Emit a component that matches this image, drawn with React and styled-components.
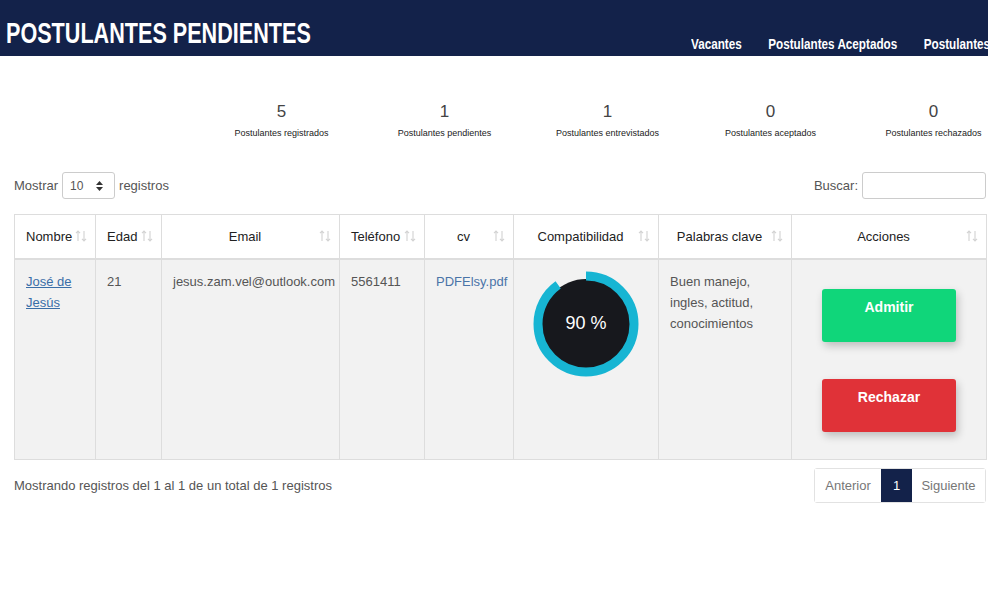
import React from 'react';
import styled, { createGlobalStyle } from 'styled-components';

const GlobalStyle = createGlobalStyle`
  body {
    margin: 0;
    background: #fff;
    font-family: 'Liberation Sans', Arial, sans-serif;
    color: #555;
    overflow: hidden;
  }
`

const Header = styled.header`
  height: 56px;
  background: #13224a;
  display: flex;
  align-items: flex-end;
  overflow: hidden;
`

const Title = styled.h1`
  flex: 1;
  margin: 0 0 8px 6px;
  font-size: 30px;
  font-weight: bold;
  color: #fff;
  white-space: nowrap;
  line-height: 1;
  transform: scaleX(0.72);
  transform-origin: left;
`

const Nav = styled.nav`
  flex-shrink: 0;
  width: 297px;
  display: flex;
  gap: 34px;
  margin-bottom: 4px;
  white-space: nowrap;
  transform: scaleX(0.78);
  transform-origin: left;
`

const NavLink = styled.a`
  color: #fff;
  font-weight: bold;
  font-size: 15px;
`

const Stats = styled.div`
  display: flex;
  margin: 46px 0 0 200px;
  width: 830px;
`

const Stat = styled.div`
  width: 163px;
  text-align: center;
`

const StatNum = styled.div`
  font-size: 17px;
  color: #444;
  line-height: 20px;
`

const StatLabel = styled.div`
  font-size: 9px;
  color: #222;
  margin-top: 6px;
`

const Controls = styled.div`
  display: flex;
  justify-content: space-between;
  align-items: center;
  padding: 0 2px 0 14px;
  margin-top: 34px;
  font-size: 13px;
  color: #555;
`

const Group = styled.label`
  display: flex;
  align-items: center;
  gap: 4px;
`

const SelectBox = styled.div`
  width: 53px;
  height: 27px;
  box-sizing: border-box;
  border: 1px solid #ccc;
  border-radius: 3px;
  display: flex;
  align-items: center;
  justify-content: space-between;
  padding: 0 11px 0 7px;
  font-size: 12px;
`

const SearchInput = styled.input`
  width: 124px;
  height: 27px;
  box-sizing: border-box;
  border: 1px solid #ccc;
  border-radius: 3px;
`

const TableWrap = styled.div`
  margin: 15px 2px 0 14px;
`

const Table = styled.table`
  width: 972px;
  border-collapse: collapse;
  table-layout: fixed;
  font-size: 13px;
`

const Th = styled.th`
  position: relative;
  height: 44px;
  box-sizing: border-box;
  border: 1px solid #ddd;
  border-bottom-width: 2px;
  background: #fff;
  color: #222;
  font-weight: normal;
  text-align: ${p => (p.$left ? 'left' : 'center')};
  padding: 0 22px 0 11px;
  white-space: nowrap;
`

const Td = styled.td`
  border: 1px solid #ddd;
  background: #f2f2f2;
  vertical-align: top;
  padding: 11px 11px;
  height: 201px;
  box-sizing: border-box;
  line-height: 21px;
  color: #555;
`

const SortIcon = styled.svg`
  position: absolute;
  right: 8px;
  top: 14px;
`

const NameLink = styled.a`
  color: #3a6ea8;
  text-decoration: underline;
`

const FileLink = styled.a`
  color: #4a74a8;
  text-decoration: none;
`

const Gauge = styled.div`
  position: relative;
  width: 106px;
  height: 106px;
  margin: 0 auto;
`

const GaugeText = styled.div`
  position: absolute;
  inset: 0;
  display: flex;
  align-items: center;
  justify-content: center;
  color: #fff;
  font-size: 18px;
`

const Actions = styled.div`
  display: flex;
  flex-direction: column;
  align-items: center;
  gap: 37px;
  padding-top: 18px;
`

const ActionButton = styled.button`
  width: 134px;
  height: 53px;
  border: none;
  border-radius: 3px;
  background: ${p => p.$color};
  color: #fff;
  font-family: 'Liberation Sans', Arial, sans-serif;
  font-weight: bold;
  font-size: 14px;
  padding-top: 10px;
  display: flex;
  justify-content: center;
  align-items: flex-start;
  box-shadow: 2px 4px 8px rgba(0, 0, 0, 0.22);
`

const Footer = styled.div`
  display: flex;
  justify-content: space-between;
  align-items: center;
  margin: 8px 2px 0 14px;
  font-size: 13px;
`

const Pager = styled.div`
  display: flex;
  height: 33px;
  border: 1px solid #e2e2e2;
  border-radius: 3px;
`

const PageItem = styled.span`
  display: flex;
  align-items: center;
  justify-content: center;
  width: ${p => p.$w}px;
  background: ${p => (p.$active ? '#13224a' : '#fff')};
  color: ${p => (p.$active ? '#fff' : '#777')};
  font-size: 13px;
`

const Sort = () => (
  <SortIcon width="12" height="14" viewBox="0 0 12 14">
    <path d="M3 12V2M1 4.2L3 2l2 2.2" stroke="#d2d2d2" strokeWidth="1.1" fill="none" />
    <path d="M9 2v10M7 9.8L9 12l2-2.2" stroke="#d2d2d2" strokeWidth="1.1" fill="none" />
  </SortIcon>
);

const stats = [
  ['5', 'Postulantes registrados'],
  ['1', 'Postulantes pendientes'],
  ['1', 'Postulantes entrevistados'],
  ['0', 'Postulantes aceptados'],
  ['0', 'Postulantes rechazados'],
];

const columns = [
  { label: 'Nombre', width: 81, left: true },
  { label: 'Edad', width: 66, left: true },
  { label: 'Email', width: 178 },
  { label: 'Teléfono', width: 85, left: true },
  { label: 'cv', width: 89 },
  { label: 'Compatibilidad', width: 145 },
  { label: 'Palabras clave', width: 133 },
  { label: 'Acciones', width: 195 },
];

const CompatGauge = ({ value }) => {
  const r = 48;
  const c = 2 * Math.PI * r;
  return (
    <Gauge>
      <svg width="106" height="106" viewBox="0 0 106 106">
        <circle cx="53" cy="53" r="45" fill="#17181d" />
        <circle
          cx="53"
          cy="53"
          r={r}
          fill="none"
          stroke="#17b5d3"
          strokeWidth="9"
          strokeDasharray={`${(c * value) / 100} ${c}`}
          transform="rotate(-90 53 53)"
        />
      </svg>
      <GaugeText>{value} %</GaugeText>
    </Gauge>
  );
};

const App = () => (
  <>
    <GlobalStyle />
    <Header>
      <Title>POSTULANTES PENDIENTES</Title>
      <Nav>
        <NavLink>Vacantes</NavLink>
        <NavLink>Postulantes Aceptados</NavLink>
        <NavLink>Postulantes Rechazados</NavLink>
      </Nav>
    </Header>
    <Stats>
      {stats.map(([n, l]) => (
        <Stat key={l}>
          <StatNum>{n}</StatNum>
          <StatLabel>{l}</StatLabel>
        </Stat>
      ))}
    </Stats>
    <Controls>
      <Group>
        Mostrar
        <SelectBox>
          10
          <svg width="7" height="10" viewBox="0 0 7 10">
            <path d="M3.5 0L7 4H0z M3.5 10L0 6h7z" fill="#333" />
          </svg>
        </SelectBox>
        registros
      </Group>
      <Group>
        Buscar:
        <SearchInput />
      </Group>
    </Controls>
    <TableWrap>
      <Table>
        <colgroup>
          {columns.map(c => (
            <col key={c.label} style={{ width: c.width }} />
          ))}
        </colgroup>
        <thead>
          <tr>
            {columns.map(c => (
              <Th key={c.label} $left={c.left}>
                {c.label}
                <Sort />
              </Th>
            ))}
          </tr>
        </thead>
        <tbody>
          <tr>
            <Td><NameLink>José de Jesús</NameLink></Td>
            <Td>21</Td>
            <Td>jesus.zam.vel@outlook.com</Td>
            <Td>5561411</Td>
            <Td><FileLink>PDFElsy.pdf</FileLink></Td>
            <Td><CompatGauge value={90} /></Td>
            <Td>Buen manejo, ingles, actitud, conocimientos</Td>
            <Td>
              <Actions>
                <ActionButton $color="#10d67a">Admitir</ActionButton>
                <ActionButton $color="#e03238">Rechazar</ActionButton>
              </Actions>
            </Td>
          </tr>
        </tbody>
      </Table>
    </TableWrap>
    <Footer>
      <span>Mostrando registros del 1 al 1 de un total de 1 registros</span>
      <Pager>
        <PageItem $w={66}>Anterior</PageItem>
        <PageItem $w={31} $active>1</PageItem>
        <PageItem $w={73}>Siguiente</PageItem>
      </Pager>
    </Footer>
  </>
);

export default App;
